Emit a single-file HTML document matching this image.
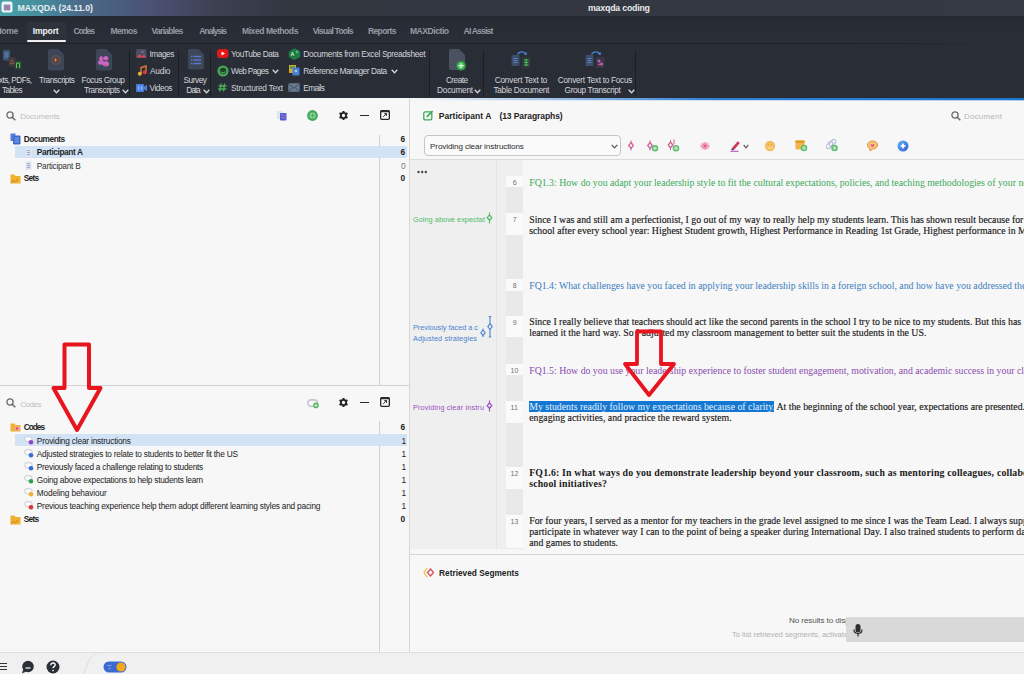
<!DOCTYPE html>
<html><head><meta charset="utf-8">
<style>
*{margin:0;padding:0;box-sizing:border-box}
html,body{width:1024px;height:674px;overflow:hidden;background:#f7f7f7;font-family:"Liberation Sans",sans-serif;position:relative}
.a{position:absolute;white-space:nowrap}
</style></head><body>
<div class="a" style="left:0px;top:0px;width:1024px;height:16px;background:linear-gradient(90deg,#49a2a7 0px,#4590a0 35px,#4a6888 85px,#4b5274 150px,#3e4052 215px,#32363f 290px,#343944 1024px);"></div>
<svg class="a" style="left:1px;top:1px" width="12" height="12" viewBox="0 0 12 12"><rect x="0.5" y="0.5" width="11" height="11" rx="2.2" fill="#eef6fa"/><rect x="2.8" y="3.5" width="6.5" height="6" rx="0.5" fill="#8a8fb0"/><path d="M4.5 4.5v4M7.5 4.5v4" stroke="#c070a0" stroke-width="1"/><path d="M5.5 5.5l1 2" stroke="#6a7ad0" stroke-width="1"/></svg>
<div class="a" style="left:17.50px;top:2.50px;font:bold 8.8px/11px 'Liberation Sans',sans-serif;color:#e9edf0;letter-spacing:-0.033px;">MAXQDA (24.11.0)</div>
<div class="a" style="left:588.00px;top:2.50px;font:bold 8.8px/11px 'Liberation Sans',sans-serif;color:#e8e9ec;letter-spacing:-0.212px;">maxqda coding</div>
<div class="a" style="left:0px;top:16px;width:1024px;height:27px;background:linear-gradient(180deg,#24282f 0px,#282c34 8px,#2a2e37 27px);"></div>
<div class="a" style="left:27px;top:22px;width:39px;height:18px;background:#2e323b;"></div>
<div class="a" style="left:27px;top:40px;width:39px;height:2px;background:#f0f0f0;border-radius:1px"></div>
<div class="a" style="left:-4.50px;top:25.70px;font:bold 8.6px/11px 'Liberation Sans',sans-serif;color:#979ba3;letter-spacing:-0.336px;">Home</div>
<div class="a" style="left:32.80px;top:25.70px;font:bold 8.6px/11px 'Liberation Sans',sans-serif;color:#f2f3f5;letter-spacing:-0.169px;">Import</div>
<div class="a" style="left:73.40px;top:25.70px;font:bold 8.6px/11px 'Liberation Sans',sans-serif;color:#979ba3;letter-spacing:-1.168px;">Codes</div>
<div class="a" style="left:110.40px;top:25.70px;font:bold 8.6px/11px 'Liberation Sans',sans-serif;color:#979ba3;letter-spacing:-0.632px;">Memos</div>
<div class="a" style="left:151.60px;top:25.70px;font:bold 8.6px/11px 'Liberation Sans',sans-serif;color:#979ba3;letter-spacing:-0.757px;">Variables</div>
<div class="a" style="left:199.20px;top:25.70px;font:bold 8.6px/11px 'Liberation Sans',sans-serif;color:#979ba3;letter-spacing:-1.070px;">Analysis</div>
<div class="a" style="left:242.00px;top:25.70px;font:bold 8.6px/11px 'Liberation Sans',sans-serif;color:#979ba3;letter-spacing:-0.470px;">Mixed Methods</div>
<div class="a" style="left:312.70px;top:25.70px;font:bold 8.6px/11px 'Liberation Sans',sans-serif;color:#979ba3;letter-spacing:-0.807px;">Visual Tools</div>
<div class="a" style="left:367.90px;top:25.70px;font:bold 8.6px/11px 'Liberation Sans',sans-serif;color:#979ba3;letter-spacing:-0.635px;">Reports</div>
<div class="a" style="left:409.90px;top:25.70px;font:bold 8.6px/11px 'Liberation Sans',sans-serif;color:#979ba3;letter-spacing:-0.475px;">MAXDictio</div>
<div class="a" style="left:463.60px;top:25.70px;font:bold 8.6px/11px 'Liberation Sans',sans-serif;color:#979ba3;letter-spacing:-0.846px;">AI Assist</div>
<div class="a" style="left:0px;top:43px;width:1024px;height:55px;background:#292d36;"></div>
<div class="a" style="left:0px;top:43px;width:1024px;height:1px;background:linear-gradient(90deg,#1f2228 0px,#1f2228 850px,#292d36 1024px);"></div>
<div class="a" style="left:129px;top:50px;width:1px;height:46px;background:#1b1e24;"></div>
<div class="a" style="left:178px;top:50px;width:1px;height:46px;background:#1b1e24;"></div>
<div class="a" style="left:210px;top:50px;width:1px;height:46px;background:#1b1e24;"></div>
<div class="a" style="left:429px;top:50px;width:1px;height:46px;background:#1b1e24;"></div>
<div class="a" style="left:483px;top:50px;width:1px;height:46px;background:#1b1e24;"></div>
<div class="a" style="left:635px;top:50px;width:1px;height:46px;background:#1b1e24;"></div>
<svg class="a" style="left:2px;top:49px" width="22" height="22" viewBox="0 0 22 22"><rect x="1" y="1" width="7" height="10.5" rx="1" fill="#3c5676"/><path d="M2.5 4h4M2.5 6h4M2.5 8h4" stroke="#6f94c4" stroke-width="0.9"/><rect x="6.5" y="8" width="7" height="9.5" rx="1" fill="#45383e"/><path d="M10 10.5l2 4h-4z" fill="none" stroke="#8a5048" stroke-width="0.9"/><rect x="12.5" y="12" width="7.5" height="8.5" rx="1" fill="#284630"/><path d="M14.5 14v5M17.5 14v5M14.5 14h3" stroke="#58c868" stroke-width="1"/></svg>
<div class="a" style="left:-1.00px;top:75.00px;font:normal 8.3px/10px 'Liberation Sans',sans-serif;color:#d2d5da;letter-spacing:-0.585px;">xts, PDFs,</div>
<div class="a" style="left:2.00px;top:84.90px;font:normal 8.3px/10px 'Liberation Sans',sans-serif;color:#d2d5da;letter-spacing:-0.677px;">Tables</div>
<svg class="a" style="left:48px;top:49px" width="16" height="22" viewBox="0 0 16 22"><path d="M2 0h8.5l5.5 5.5V19.5a2 2 0 0 1-2 2H2a2 2 0 0 1-2-2V2a2 2 0 0 1 2-2z" fill="#3e4758"/><circle cx="8" cy="11" r="4.3" fill="#4a4650" stroke="#7a5048" stroke-width="1"/><path d="M6.8 9.2l3 1.8-3 1.8z" fill="#e8b030"/><circle cx="8.6" cy="11" r="0.9" fill="#e02828"/></svg>
<div class="a" style="left:39.00px;top:75.00px;font:normal 8.3px/10px 'Liberation Sans',sans-serif;color:#d2d5da;letter-spacing:-0.475px;">Transcripts</div>
<svg class="a" style="left:53px;top:89px" width="7" height="5" viewBox="0 0 7 5"><path d="M0.7 0.8L3.50 3.8L6.30 0.8" stroke="#d2d5da" stroke-width="1.3" fill="none"/></svg>
<svg class="a" style="left:96px;top:49px" width="16" height="22" viewBox="0 0 16 22"><path d="M2 0h8.5l5.5 5.5V19.5a2 2 0 0 1-2 2H2a2 2 0 0 1-2-2V2a2 2 0 0 1 2-2z" fill="#3e4758"/><circle cx="5.5" cy="9.5" r="2.3" fill="#c868c8"/><circle cx="10" cy="9.2" r="2.3" fill="#c868c8"/><ellipse cx="5" cy="13.5" rx="3" ry="2.2" fill="#c868c8"/><ellipse cx="9.8" cy="14.8" rx="3.2" ry="2.6" fill="#c868c8"/><circle cx="6.5" cy="9" r="0.8" fill="#e03040"/><circle cx="11.5" cy="11" r="0.8" fill="#e03040"/><circle cx="9.5" cy="16" r="0.8" fill="#e03040"/></svg>
<div class="a" style="left:81.60px;top:75.00px;font:normal 8.3px/10px 'Liberation Sans',sans-serif;color:#d2d5da;letter-spacing:-0.457px;">Focus Group</div>
<div class="a" style="left:84.00px;top:84.90px;font:normal 8.3px/10px 'Liberation Sans',sans-serif;color:#d2d5da;letter-spacing:-0.475px;">Transcripts</div>
<svg class="a" style="left:121.5px;top:89px" width="7" height="5" viewBox="0 0 7 5"><path d="M0.7 0.8L3.50 3.8L6.30 0.8" stroke="#d2d5da" stroke-width="1.3" fill="none"/></svg>
<svg class="a" style="left:136px;top:49px" width="11" height="9" viewBox="0 0 11 9"><rect x="0" y="0" width="10.5" height="9" rx="1.5" fill="#4a5060"/><path d="M0.5 8.5l3-3.5 2.5 2.5 2-2 2.5 3z" fill="#d84858"/><circle cx="6.5" cy="3" r="1" fill="#9a7ab0"/></svg>
<div class="a" style="left:149.50px;top:49.00px;font:normal 8.3px/10px 'Liberation Sans',sans-serif;color:#d2d5da;letter-spacing:-0.465px;">Images</div>
<svg class="a" style="left:137px;top:65px" width="10" height="11" viewBox="0 0 10 11"><path d="M4 9V2.5l5-1.5v6" stroke="#e07838" stroke-width="1.4" fill="none"/><circle cx="2.8" cy="8.8" r="2" fill="#e8b030"/><circle cx="7.8" cy="7.3" r="2" fill="#d84040"/></svg>
<div class="a" style="left:150.00px;top:66.10px;font:normal 8.3px/10px 'Liberation Sans',sans-serif;color:#d2d5da;letter-spacing:-0.212px;">Audio</div>
<svg class="a" style="left:136px;top:84px" width="11" height="8" viewBox="0 0 11 8"><rect x="0" y="0" width="8" height="8" rx="1" fill="#4a7ee0"/><path d="M8 2.5l3-1.5v6l-3-1.5z" fill="#4a7ee0"/><rect x="2" y="2" width="1.5" height="4" fill="#8ab0f0"/><rect x="5" y="2" width="1.5" height="4" fill="#8ab0f0"/></svg>
<div class="a" style="left:149.50px;top:82.80px;font:normal 8.3px/10px 'Liberation Sans',sans-serif;color:#d2d5da;letter-spacing:-0.446px;">Videos</div>
<svg class="a" style="left:188px;top:49px" width="16" height="21" viewBox="0 0 16 21"><path d="M2 0h8.5l5.5 5.5V18.5a2 2 0 0 1-2 2H2a2 2 0 0 1-2-2V2a2 2 0 0 1 2-2z" fill="#3e4758"/><path d="M3 7.5h10M3 11h10M3 14.5h10" stroke="#5878c8" stroke-width="1.4"/><path d="M5 6.5v9" stroke="#3c4556" stroke-width="0.8"/></svg>
<div class="a" style="left:183.60px;top:74.50px;font:normal 8.3px/10px 'Liberation Sans',sans-serif;color:#d2d5da;letter-spacing:-0.503px;">Survey</div>
<div class="a" style="left:186.20px;top:84.90px;font:normal 8.3px/10px 'Liberation Sans',sans-serif;color:#d2d5da;letter-spacing:-1.018px;">Data</div>
<svg class="a" style="left:203px;top:89px" width="7" height="5" viewBox="0 0 7 5"><path d="M0.7 0.8L3.50 3.8L6.30 0.8" stroke="#d2d5da" stroke-width="1.3" fill="none"/></svg>
<svg class="a" style="left:217px;top:49px" width="12" height="9" viewBox="0 0 12 9"><rect x="0" y="0" width="11.5" height="9" rx="3" fill="#e01818"/><path d="M4.5 2.5l3.5 2-3.5 2z" fill="#fff"/></svg>
<div class="a" style="left:231.10px;top:49.00px;font:normal 8.3px/10px 'Liberation Sans',sans-serif;color:#d2d5da;letter-spacing:-0.418px;">YouTube Data</div>
<svg class="a" style="left:217px;top:65px" width="12" height="12" viewBox="0 0 12 12"><circle cx="6" cy="6" r="5.6" fill="#48a858"/><circle cx="6" cy="6" r="3.2" fill="#24402c"/><path d="M3.6 6.5c0.8 1.6 3.2 2 4.6 0.2" stroke="#48a858" stroke-width="1.1" fill="none"/></svg>
<div class="a" style="left:231.10px;top:66.10px;font:normal 8.3px/10px 'Liberation Sans',sans-serif;color:#d2d5da;letter-spacing:-0.618px;">Web Pages</div>
<svg class="a" style="left:272px;top:69px" width="7" height="5" viewBox="0 0 7 5"><path d="M0.7 0.8L3.50 3.8L6.30 0.8" stroke="#d2d5da" stroke-width="1.3" fill="none"/></svg>
<svg class="a" style="left:218px;top:83px" width="9" height="9" viewBox="0 0 9 9"><path d="M3 0.5L2 8.5M6.5 0.5l-1 8M0.5 3h8M0.2 6h8" stroke="#48b060" stroke-width="1.3"/></svg>
<div class="a" style="left:231.10px;top:82.80px;font:normal 8.3px/10px 'Liberation Sans',sans-serif;color:#d2d5da;letter-spacing:-0.268px;">Structured Text</div>
<svg class="a" style="left:288px;top:48px" width="13" height="12" viewBox="0 0 13 12"><path d="M6.5 0.3l5.8 3.2v5.4l-5.8 3.2-5.8-3.2V3.5z" fill="#1f7a44"/><path d="M3 8l1.5-4 1.5 4M3.6 6.6h1.8" stroke="#c8f0d0" stroke-width="0.8" fill="none"/><circle cx="9" cy="4" r="1.4" fill="#40c070"/></svg>
<div class="a" style="left:303.30px;top:49.00px;font:normal 8.3px/10px 'Liberation Sans',sans-serif;color:#d2d5da;letter-spacing:-0.341px;">Documents from Excel Spreadsheet</div>
<svg class="a" style="left:289px;top:65px" width="11" height="11" viewBox="0 0 11 11"><rect x="0" y="0" width="7" height="8" fill="#d8a830"/><rect x="1" y="1" width="5" height="3" fill="#58a048"/><rect x="3.5" y="2.5" width="7" height="8" fill="#4a80d0"/><circle cx="7" cy="6" r="1.3" fill="#a8c8f0"/></svg>
<div class="a" style="left:303.30px;top:66.10px;font:normal 8.3px/10px 'Liberation Sans',sans-serif;color:#d2d5da;letter-spacing:-0.445px;">Reference Manager Data</div>
<svg class="a" style="left:390.5px;top:69px" width="7" height="5" viewBox="0 0 7 5"><path d="M0.7 0.8L3.50 3.8L6.30 0.8" stroke="#d2d5da" stroke-width="1.3" fill="none"/></svg>
<svg class="a" style="left:288px;top:83px" width="12" height="9" viewBox="0 0 12 9"><rect x="0.3" y="0.3" width="11.4" height="8.4" rx="1" fill="#6a7c92"/><path d="M0.6 0.8l5.4 4.4 5.4-4.4M0.6 8.2l4-3.2M11.4 8.2l-4-3.2" stroke="#3b4554" stroke-width="0.9" fill="none"/></svg>
<div class="a" style="left:303.30px;top:82.80px;font:normal 8.3px/10px 'Liberation Sans',sans-serif;color:#d2d5da;letter-spacing:-0.680px;">Emails</div>
<svg class="a" style="left:449px;top:49px" width="19" height="23" viewBox="0 0 19 23"><path d="M2 0h8l6 6v13a2 2 0 0 1-2 2H2a2 2 0 0 1-2-2V2a2 2 0 0 1 2-2z" fill="#4a5262"/><circle cx="12" cy="16.7" r="5" fill="#2c8a40"/><circle cx="12" cy="16.7" r="3.6" fill="#48c060"/><path d="M12 14.2v5M9.5 16.7h5" stroke="#e8ffe8" stroke-width="1.2"/></svg>
<div class="a" style="left:445.90px;top:74.80px;font:normal 8.3px/10px 'Liberation Sans',sans-serif;color:#d2d5da;letter-spacing:-0.540px;">Create</div>
<div class="a" style="left:437.00px;top:84.90px;font:normal 8.3px/10px 'Liberation Sans',sans-serif;color:#d2d5da;letter-spacing:-0.235px;">Document</div>
<svg class="a" style="left:474px;top:89px" width="7" height="5" viewBox="0 0 7 5"><path d="M0.7 0.8L3.50 3.8L6.30 0.8" stroke="#d2d5da" stroke-width="1.3" fill="none"/></svg>
<svg class="a" style="left:511px;top:50px" width="20" height="19" viewBox="0 0 20 19"><path d="M6.5 4.5C8 1.5 12 1 14.5 3.5" stroke="#4a8ae0" stroke-width="1.3" fill="none"/><path d="M15.5 1.8l0.4 3.2-3-0.6z" fill="#4a8ae0"/><rect x="0.5" y="5" width="8" height="11" rx="1" fill="#3d4d6a"/><path d="M2.5 8.5h4M2.5 10.5h4M2.5 12.5h4" stroke="#5a88d0" stroke-width="0.9"/><rect x="11" y="7" width="8.5" height="11" rx="1" fill="#2e3a38"/><path d="M13 10h4.5M13 12.5h4.5M13 15h4.5M15.2 9v7" stroke="#40c060" stroke-width="1"/></svg>
<div class="a" style="left:494.70px;top:74.80px;font:normal 8.3px/10px 'Liberation Sans',sans-serif;color:#d2d5da;letter-spacing:-0.211px;">Convert Text to</div>
<div class="a" style="left:493.50px;top:84.90px;font:normal 8.3px/10px 'Liberation Sans',sans-serif;color:#d2d5da;letter-spacing:-0.321px;">Table Document</div>
<svg class="a" style="left:585px;top:50px" width="20" height="19" viewBox="0 0 20 19"><path d="M6.5 4.5C8 1.5 12 1 14.5 3.5" stroke="#4a8ae0" stroke-width="1.3" fill="none"/><path d="M15.5 1.8l0.4 3.2-3-0.6z" fill="#4a8ae0"/><rect x="0.5" y="5" width="8" height="11" rx="1" fill="#3d4d6a"/><path d="M2.5 8.5h4M2.5 10.5h4M2.5 12.5h4" stroke="#5a88d0" stroke-width="0.9"/><rect x="11" y="7" width="8.5" height="11" rx="1" fill="#3c3648"/><circle cx="14" cy="11" r="1.5" fill="#c060c0"/><circle cx="16.5" cy="14" r="1.5" fill="#c060c0"/><circle cx="14" cy="14.5" r="1" fill="#e05070"/></svg>
<div class="a" style="left:557.80px;top:74.60px;font:normal 8.3px/10px 'Liberation Sans',sans-serif;color:#d2d5da;letter-spacing:-0.295px;">Convert Text to Focus</div>
<div class="a" style="left:564.60px;top:84.90px;font:normal 8.3px/10px 'Liberation Sans',sans-serif;color:#d2d5da;letter-spacing:-0.376px;">Group Transcript</div>
<svg class="a" style="left:627.5px;top:89px" width="7" height="5" viewBox="0 0 7 5"><path d="M0.7 0.8L3.50 3.8L6.30 0.8" stroke="#d2d5da" stroke-width="1.3" fill="none"/></svg>
<div class="a" style="left:0px;top:98px;width:409px;height:555px;background:#f7f7f7;"></div>
<div class="a" style="left:409px;top:98px;width:1px;height:555px;background:#d6d6d6;"></div>
<svg class="a" style="left:6px;top:111px" width="10" height="10" viewBox="0 0 10 10"><circle cx="4" cy="4" r="3.1" stroke="#6a6a6a" stroke-width="1.3" fill="none"/><path d="M6.2 6.2L9.3 9.3" stroke="#6a6a6a" stroke-width="1.5"/></svg>
<div class="a" style="left:20.20px;top:111.60px;font:normal 8.1px/10px 'Liberation Sans',sans-serif;color:#c0c0c0;letter-spacing:-0.161px;">Documents</div>
<svg class="a" style="left:276px;top:110px" width="11" height="11" viewBox="0 0 11 11"><rect x="1" y="1" width="5" height="8" fill="#dde6f2"/><rect x="4" y="3" width="6.5" height="7.5" rx="0.8" fill="#4a62d8"/><path d="M5 4.5l4.5 1.5M5 7l4.5 1.5" stroke="#d070b0" stroke-width="0.9"/></svg>
<svg class="a" style="left:307px;top:110px" width="12" height="12" viewBox="0 0 12 12"><circle cx="5.5" cy="5.5" r="5.4" fill="#48a85a"/><circle cx="5.5" cy="5.5" r="3" fill="#8ad49a"/><path d="M5.5 3.5v4M3.5 5.5h4" stroke="#48a85a" stroke-width="1"/></svg>
<svg class="a" style="left:338px;top:110px" width="11" height="11" viewBox="0 0 11 11"><g transform="translate(5.5 5.5)"><circle r="2.6" fill="none" stroke="#252525" stroke-width="1.9"/><path d="M0 -4.6v2M0 2.6v2M-3.98 -2.3l1.73 1M2.25 1.3l1.73 1M-3.98 2.3l1.73 -1M2.25 -1.3l1.73 -1" stroke="#252525" stroke-width="2"/></g></svg>
<div class="a" style="left:360px;top:114.5px;width:9px;height:1.8px;background:#2a2a2a;"></div>
<svg class="a" style="left:380px;top:110px" width="10" height="10" viewBox="0 0 10 10"><rect x="0.65" y="0.65" width="8.7" height="8.7" fill="none" stroke="#2a2a2a" stroke-width="1.3" rx="1"/><rect x="0.65" y="0.65" width="8.7" height="1.6" fill="#2a2a2a"/><path d="M3.3 6.8L6.5 3.6M4.3 3.6h2.2v2.2" stroke="#2a2a2a" stroke-width="1" fill="none"/></svg>
<div class="a" style="left:379px;top:135px;width:1px;height:250px;background:#d2d2d2;"></div>
<div class="a" style="left:15px;top:145.5px;width:392px;height:12.5px;background:#d3e3f6;"></div>
<svg class="a" style="left:10px;top:133px" width="11" height="12" viewBox="0 0 11 12"><rect x="0.5" y="0.5" width="5" height="7.5" fill="#5a7ad8"/><rect x="3" y="2.5" width="7.5" height="9" rx="1.2" fill="#3a6ad0"/><path d="M4.5 5h4.5M4.5 7h4.5M4.5 9h4.5" stroke="#9ab8f0" stroke-width="0.8"/></svg>
<div class="a" style="left:23.70px;top:134.40px;font:bold 8.3px/10px 'Liberation Sans',sans-serif;color:#1e1e1e;letter-spacing:-0.462px;">Documents</div>
<div class="a" style="left:400.50px;top:134.40px;font:bold 8.3px/10px 'Liberation Sans',sans-serif;color:#1e1e1e;letter-spacing:0.000px;">6</div>
<svg class="a" style="left:25px;top:148px" width="7" height="9" viewBox="0 0 7 9"><rect x="0.5" y="0.5" width="6" height="8.5" fill="#e2e7f3"/><path d="M1.8 2.6h3.4M1.8 4.6h3.4M1.8 6.6h3.4" stroke="#8898c0" stroke-width="0.8"/></svg>
<div class="a" style="left:36.80px;top:147.40px;font:bold 8.3px/10px 'Liberation Sans',sans-serif;color:#1e1e1e;letter-spacing:-0.390px;">Participant A</div>
<div class="a" style="left:400.50px;top:147.40px;font:bold 8.3px/10px 'Liberation Sans',sans-serif;color:#1e1e1e;letter-spacing:0.000px;">6</div>
<svg class="a" style="left:25px;top:161px" width="7" height="9" viewBox="0 0 7 9"><rect x="0.5" y="0.5" width="6" height="8.5" fill="#e2e7f3"/><path d="M1.8 2.6h3.4M1.8 4.6h3.4M1.8 6.6h3.4" stroke="#8898c0" stroke-width="0.8"/></svg>
<div class="a" style="left:36.80px;top:160.60px;font:normal 8.3px/10px 'Liberation Sans',sans-serif;color:#333;letter-spacing:-0.263px;">Participant B</div>
<div class="a" style="left:401.00px;top:160.60px;font:normal 8.3px/10px 'Liberation Sans',sans-serif;color:#777;letter-spacing:0.000px;">0</div>
<svg class="a" style="left:10px;top:173px" width="11" height="11" viewBox="0 0 11 11"><path d="M0.5 1.5h4l1 1.5h5v7.5h-10z" fill="#f0b030"/><path d="M1 10l2.5-3 2 2 2.5-3" stroke="#c87818" stroke-width="0.9" fill="none"/></svg>
<div class="a" style="left:23.70px;top:173.40px;font:bold 8.3px/10px 'Liberation Sans',sans-serif;color:#1e1e1e;letter-spacing:-0.704px;">Sets</div>
<div class="a" style="left:400.50px;top:173.40px;font:bold 8.3px/10px 'Liberation Sans',sans-serif;color:#1e1e1e;letter-spacing:0.000px;">0</div>
<div class="a" style="left:0px;top:384.5px;width:409px;height:1px;background:#d2d2d2;"></div>
<svg class="a" style="left:6px;top:398px" width="10" height="10" viewBox="0 0 10 10"><circle cx="4" cy="4" r="3.1" stroke="#6a6a6a" stroke-width="1.3" fill="none"/><path d="M6.2 6.2L9.3 9.3" stroke="#6a6a6a" stroke-width="1.5"/></svg>
<div class="a" style="left:20.20px;top:399.50px;font:normal 8.1px/10px 'Liberation Sans',sans-serif;color:#c0c0c0;letter-spacing:-0.527px;">Codes</div>
<svg class="a" style="left:307px;top:398px" width="13" height="11" viewBox="0 0 13 11"><rect x="0.9" y="1.9" width="9.5" height="6.5" rx="3.2" fill="#fafafa" stroke="#c4c8d0" stroke-width="1.6"/><circle cx="9" cy="7.4" r="2.8" fill="#58b868"/><path d="M9 6v2.8M7.6 7.4h2.8" stroke="#e8f8ea" stroke-width="0.9"/></svg>
<svg class="a" style="left:338px;top:397px" width="11" height="11" viewBox="0 0 11 11"><g transform="translate(5.5 5.5)"><circle r="2.6" fill="none" stroke="#252525" stroke-width="1.9"/><path d="M0 -4.6v2M0 2.6v2M-3.98 -2.3l1.73 1M2.25 1.3l1.73 1M-3.98 2.3l1.73 -1M2.25 -1.3l1.73 -1" stroke="#252525" stroke-width="2"/></g></svg>
<div class="a" style="left:360px;top:401.5px;width:9px;height:1.8px;background:#2a2a2a;"></div>
<svg class="a" style="left:380px;top:397px" width="10" height="10" viewBox="0 0 10 10"><rect x="0.65" y="0.65" width="8.7" height="8.7" fill="none" stroke="#2a2a2a" stroke-width="1.3" rx="1"/><rect x="0.65" y="0.65" width="8.7" height="1.6" fill="#2a2a2a"/><path d="M3.3 6.8L6.5 3.6M4.3 3.6h2.2v2.2" stroke="#2a2a2a" stroke-width="1" fill="none"/></svg>
<div class="a" style="left:379px;top:421px;width:1px;height:232px;background:#d2d2d2;"></div>
<div class="a" style="left:15px;top:433.5px;width:392px;height:12.5px;background:#d3e3f6;"></div>
<svg class="a" style="left:10px;top:422px" width="11" height="10" viewBox="0 0 11 10"><path d="M0.5 1.5h4l1 1.5h5v6.5h-10z" fill="#f0b030"/><rect x="4" y="4.5" width="6" height="4" rx="2" fill="#f0a0b0"/><circle cx="7" cy="6.5" r="1" fill="#d03060"/></svg>
<div class="a" style="left:23.70px;top:421.70px;font:bold 8.3px/10px 'Liberation Sans',sans-serif;color:#1e1e1e;letter-spacing:-0.989px;">Codes</div>
<div class="a" style="left:400.50px;top:421.70px;font:bold 8.3px/10px 'Liberation Sans',sans-serif;color:#1e1e1e;letter-spacing:0.000px;">6</div>
<svg class="a" style="left:24px;top:434.5px" width="10" height="10" viewBox="0 0 10 10"><rect x="0.8" y="1.6" width="7.2" height="5" rx="2.5" fill="#fbfbfb" stroke="#d2d6dc" stroke-width="1.3"/><circle cx="7" cy="7.2" r="2.3" fill="#8a48c8"/></svg>
<div class="a" style="left:36.80px;top:435.50px;font:normal 8.3px/10px 'Liberation Sans',sans-serif;color:#222;letter-spacing:-0.185px;">Providing clear instructions</div>
<div class="a" style="left:401.50px;top:435.50px;font:normal 8.3px/10px 'Liberation Sans',sans-serif;color:#222;letter-spacing:0.000px;">1</div>
<svg class="a" style="left:24px;top:447.6px" width="10" height="10" viewBox="0 0 10 10"><rect x="0.8" y="1.6" width="7.2" height="5" rx="2.5" fill="#fbfbfb" stroke="#d2d6dc" stroke-width="1.3"/><circle cx="7" cy="7.2" r="2.3" fill="#3a6ad8"/></svg>
<div class="a" style="left:36.80px;top:448.60px;font:normal 8.3px/10px 'Liberation Sans',sans-serif;color:#222;letter-spacing:-0.225px;">Adjusted strategies to relate to students to better fit the US</div>
<div class="a" style="left:401.50px;top:448.60px;font:normal 8.3px/10px 'Liberation Sans',sans-serif;color:#222;letter-spacing:0.000px;">1</div>
<svg class="a" style="left:24px;top:460.7px" width="10" height="10" viewBox="0 0 10 10"><rect x="0.8" y="1.6" width="7.2" height="5" rx="2.5" fill="#fbfbfb" stroke="#d2d6dc" stroke-width="1.3"/><circle cx="7" cy="7.2" r="2.3" fill="#3a6ad8"/></svg>
<div class="a" style="left:36.80px;top:461.70px;font:normal 8.3px/10px 'Liberation Sans',sans-serif;color:#222;letter-spacing:-0.242px;">Previously faced a challenge relating to students</div>
<div class="a" style="left:401.50px;top:461.70px;font:normal 8.3px/10px 'Liberation Sans',sans-serif;color:#222;letter-spacing:0.000px;">1</div>
<svg class="a" style="left:24px;top:473.8px" width="10" height="10" viewBox="0 0 10 10"><rect x="0.8" y="1.6" width="7.2" height="5" rx="2.5" fill="#fbfbfb" stroke="#d2d6dc" stroke-width="1.3"/><circle cx="7" cy="7.2" r="2.3" fill="#30a050"/></svg>
<div class="a" style="left:36.80px;top:474.80px;font:normal 8.3px/10px 'Liberation Sans',sans-serif;color:#222;letter-spacing:-0.243px;">Going above expectations to help students learn</div>
<div class="a" style="left:401.50px;top:474.80px;font:normal 8.3px/10px 'Liberation Sans',sans-serif;color:#222;letter-spacing:0.000px;">1</div>
<svg class="a" style="left:24px;top:486.9px" width="10" height="10" viewBox="0 0 10 10"><rect x="0.8" y="1.6" width="7.2" height="5" rx="2.5" fill="#fbfbfb" stroke="#d2d6dc" stroke-width="1.3"/><circle cx="7" cy="7.2" r="2.3" fill="#f0b030"/></svg>
<div class="a" style="left:36.80px;top:487.90px;font:normal 8.3px/10px 'Liberation Sans',sans-serif;color:#222;letter-spacing:-0.151px;">Modeling behaviour</div>
<div class="a" style="left:401.50px;top:487.90px;font:normal 8.3px/10px 'Liberation Sans',sans-serif;color:#222;letter-spacing:0.000px;">1</div>
<svg class="a" style="left:24px;top:500.0px" width="10" height="10" viewBox="0 0 10 10"><rect x="0.8" y="1.6" width="7.2" height="5" rx="2.5" fill="#fbfbfb" stroke="#d2d6dc" stroke-width="1.3"/><circle cx="7" cy="7.2" r="2.3" fill="#d83838"/></svg>
<div class="a" style="left:36.80px;top:501.00px;font:normal 8.3px/10px 'Liberation Sans',sans-serif;color:#222;letter-spacing:-0.217px;">Previous teaching experience help them adopt different learning styles and pacing</div>
<div class="a" style="left:401.50px;top:501.00px;font:normal 8.3px/10px 'Liberation Sans',sans-serif;color:#222;letter-spacing:0.000px;">1</div>
<svg class="a" style="left:10px;top:513.5px" width="12" height="11" viewBox="0 0 12 11"><path d="M0.5 1.5h4l1 1.5h5v7.5h-10z" fill="#f0b030"/><path d="M1 10l2.5-3 2 2 2.5-3" stroke="#c87818" stroke-width="0.9" fill="none"/></svg>
<div class="a" style="left:23.70px;top:514.00px;font:bold 8.3px/10px 'Liberation Sans',sans-serif;color:#1e1e1e;letter-spacing:-0.704px;">Sets</div>
<div class="a" style="left:400.50px;top:514.00px;font:bold 8.3px/10px 'Liberation Sans',sans-serif;color:#1e1e1e;letter-spacing:0.000px;">0</div>
<div class="a" style="left:410px;top:98px;width:614px;height:555px;background:#f7f7f7;"></div>
<div class="a" style="left:410px;top:97.5px;width:614px;height:2px;background:linear-gradient(90deg,rgba(40,120,210,0) 0px,rgba(40,120,210,0.35) 120px,rgba(30,115,210,0.9) 300px,#1f74cc 614px);"></div>
<div class="a" style="left:410px;top:99.5px;width:614px;height:1.2px;background:linear-gradient(90deg,rgba(120,180,240,0) 0px,rgba(120,180,240,0.2) 150px,rgba(120,180,240,0.6) 614px);"></div>
<svg class="a" style="left:423px;top:110px" width="11" height="11" viewBox="0 0 11 11"><rect x="0.8" y="1.8" width="8" height="8" rx="1.3" fill="none" stroke="#3aa858" stroke-width="1.3"/><path d="M3.8 6.8L9.6 1" stroke="#3aa858" stroke-width="1.7"/></svg>
<div class="a" style="left:438.70px;top:111.10px;font:bold 8.5px/11px 'Liberation Sans',sans-serif;color:#222;letter-spacing:0.058px;">Participant A</div>
<div class="a" style="left:499.40px;top:111.10px;font:bold 8.5px/11px 'Liberation Sans',sans-serif;color:#222;letter-spacing:-0.069px;">(13 Paragraphs)</div>
<svg class="a" style="left:951px;top:111px" width="10" height="10" viewBox="0 0 10 10"><circle cx="4" cy="4" r="3.1" stroke="#6a6a6a" stroke-width="1.3" fill="none"/><path d="M6.2 6.2L9.3 9.3" stroke="#6a6a6a" stroke-width="1.5"/></svg>
<div class="a" style="left:964.00px;top:111.60px;font:normal 8.1px/10px 'Liberation Sans',sans-serif;color:#b8b8b8;letter-spacing:0.152px;">Document</div>
<div class="a" style="left:423.5px;top:135px;width:197px;height:21px;background:#fafafa;border:1px solid #c6c6c6;border-radius:4px"></div>
<div class="a" style="left:430.00px;top:142.00px;font:normal 8.1px/10px 'Liberation Sans',sans-serif;color:#2a2a2a;letter-spacing:-0.104px;">Providing clear instructions</div>
<svg class="a" style="left:610.5px;top:143.5px" width="7" height="5" viewBox="0 0 7 5"><path d="M0.7 0.8L3.50 3.8L6.30 0.8" stroke="#555" stroke-width="1.2" fill="none"/></svg>
<svg class="a" style="left:627px;top:140px" width="8" height="11" viewBox="0 0 8 11"><path d="M4 0.5v2M4 8.5v2" stroke="#d0609a" stroke-width="1"/><path d="M4 2.5L6.3 5.5 4 8.5 1.7000000000000002 5.5z" fill="none" stroke="#d0609a" stroke-width="1.3"/></svg>
<svg class="a" style="left:646px;top:140px" width="13" height="12" viewBox="0 0 13 12"><path d="M4 0.5v2M4 8.5v2" stroke="#d0609a" stroke-width="1"/><path d="M4 2.5L6.3 5.5 4 8.5 1.7000000000000002 5.5z" fill="none" stroke="#d0609a" stroke-width="1.3"/><circle cx="9" cy="8.3" r="3.3" fill="#62bc74"/><circle cx="9" cy="8.3" r="1.7" fill="#b8e6c0"/></svg>
<svg class="a" style="left:667px;top:139px" width="13" height="13" viewBox="0 0 13 13"><path d="M3.5 1v2M3.5 9v2M7 0.5v5" stroke="#d0609a" stroke-width="1"/><path d="M3.5 3L5.8 6 3.5 9 1.2000000000000002 6z" fill="none" stroke="#d0609a" stroke-width="1.3"/><circle cx="9" cy="9.3" r="3.3" fill="#62bc74"/><circle cx="9" cy="9.3" r="1.7" fill="#b8e6c0"/></svg>
<svg class="a" style="left:699px;top:141px" width="12" height="10" viewBox="0 0 12 10"><ellipse cx="6" cy="5" rx="5" ry="4" fill="#f5cadb"/><path d="M2 5h8M6 1.5v7M3.5 2.5l5 5M8.5 2.5l-5 5" stroke="#e0507e" stroke-width="0.8"/></svg>
<svg class="a" style="left:730px;top:139px" width="11" height="13" viewBox="0 0 11 13"><path d="M2 9L7.8 2.2l2 1.8-5.8 7z" fill="#d03858"/><path d="M2 9l-0.8 2.3 2.6-0.4z" fill="#402030"/><path d="M0.5 12.3h8" stroke="#a848c8" stroke-width="1"/></svg>
<svg class="a" style="left:743px;top:144px" width="6" height="5" viewBox="0 0 6 5"><path d="M0.7 0.8L3.00 3.8L5.30 0.8" stroke="#555" stroke-width="1.1" fill="none"/></svg>
<svg class="a" style="left:764px;top:140px" width="12" height="12" viewBox="0 0 12 12"><circle cx="6" cy="6" r="5.2" fill="#f2c060"/><path d="M3.5 7c1.3 1.4 3.7 1.4 5 0" stroke="#f8e0a8" stroke-width="1.1" fill="none"/><circle cx="4.3" cy="4.6" r="0.7" fill="#e09838"/><circle cx="7.7" cy="4.6" r="0.7" fill="#e09838"/></svg>
<svg class="a" style="left:795px;top:139px" width="13" height="13" viewBox="0 0 13 13"><rect x="0.5" y="1.5" width="9" height="9" rx="1" fill="#f2b648"/><rect x="0.5" y="1.5" width="9" height="2.5" fill="#e49a28"/><circle cx="9" cy="9" r="3.3" fill="#62bc74"/><circle cx="9" cy="9" r="1.7" fill="#b8e6c0"/></svg>
<svg class="a" style="left:826px;top:139px" width="13" height="13" viewBox="0 0 13 13"><rect x="1.5" y="2" width="4" height="8" rx="2" transform="rotate(40 3.5 6)" fill="none" stroke="#b0bcd8" stroke-width="1.1"/><rect x="4.5" y="0" width="4" height="8" rx="2" transform="rotate(40 6.5 4)" fill="none" stroke="#b0bcd8" stroke-width="1.1"/><circle cx="8.5" cy="9" r="3.3" fill="#62bc74"/><circle cx="8.5" cy="9" r="1.7" fill="#b8e6c0"/></svg>
<svg class="a" style="left:867px;top:140px" width="11" height="12" viewBox="0 0 11 12"><path d="M5.5 1C8.5 1 10.5 3 10.5 5S8.5 9 5.5 9L3 11V8.6C1.5 8 0.5 6.6 0.5 5 0.5 3 2.5 1 5.5 1z" fill="#f6c878" stroke="#f0883a" stroke-width="1"/><path d="M3.6 4.6c0.6-1 1.6-0.6 1.9 0.2 0.3-0.8 1.3-1.2 1.9-0.2 0.4 0.9-0.8 1.8-1.9 2.6-1.1-0.8-2.3-1.7-1.9-2.6z" fill="#e85a8a"/></svg>
<svg class="a" style="left:897px;top:140px" width="12" height="12" viewBox="0 0 12 12"><defs><linearGradient id="bg1" x1="0" y1="0" x2="1" y2="1"><stop offset="0" stop-color="#5ab8f0"/><stop offset="1" stop-color="#3a5ad8"/></linearGradient></defs><circle cx="6" cy="6" r="5.5" fill="url(#bg1)"/><path d="M6 2.8Q6.6 5.4 9.2 6 6.6 6.6 6 9.2 5.4 6.6 2.8 6 5.4 5.4 6 2.8z" fill="#fff"/></svg>
<div class="a" style="left:410px;top:159px;width:614px;height:1px;background:#dcdcdc;"></div>
<div class="a" style="left:410px;top:160px;width:113px;height:389px;background:#efefef;"></div>
<div class="a" style="left:496px;top:160px;width:1px;height:389px;background:#e6e6e6;"></div>
<div class="a" style="left:506px;top:176px;width:17px;height:373px;background:#e9e9e9;"></div>
<div class="a" style="left:523px;top:160px;width:501px;height:394px;background:#f7f7f7;"></div>
<svg class="a" style="left:416px;top:169px" width="12" height="6" viewBox="0 0 12 6"><circle cx="2.5" cy="3" r="1.2" fill="#444"/><circle cx="6.2" cy="3" r="1.2" fill="#444"/><circle cx="9.8" cy="3" r="1.2" fill="#444"/></svg>
<div class="a" style="left:506px;top:176px;width:17px;height:11px;background:#fafafa;"></div>
<div class="a" style="left:512.80px;top:178.00px;font:normal 7px/9px 'Liberation Sans',sans-serif;color:#707070;letter-spacing:0.000px;">6</div>
<div class="a" style="left:529.20px;top:176.60px;font:normal 9.8px/12px 'Liberation Serif',serif;color:#3aaa5a;letter-spacing:0.000px;">FQ1.3: How do you adapt your leadership style to fit the cultural expectations, policies, and teaching methodologies of your new school</div>
<div class="a" style="left:506px;top:213px;width:17px;height:22px;background:#fafafa;"></div>
<div class="a" style="left:512.80px;top:215.00px;font:normal 7px/9px 'Liberation Sans',sans-serif;color:#707070;letter-spacing:0.000px;">7</div>
<div class="a" style="left:529.20px;top:213.60px;font:normal 9.8px/12px 'Liberation Serif',serif;color:#1a1a1a;letter-spacing:0.000px;-webkit-text-stroke:0.15px #1a1a1a;">Since I was and still am a perfectionist, I go out of my way to really help my students learn. This has shown result because for</div>
<div class="a" style="left:529.20px;top:224.60px;font:normal 9.8px/12px 'Liberation Serif',serif;color:#1a1a1a;letter-spacing:0.000px;-webkit-text-stroke:0.15px #1a1a1a;">school after every school year: Highest Student growth, Highest Performance in Reading 1st Grade, Highest performance in Math</div>
<div class="a" style="left:506px;top:279px;width:17px;height:12px;background:#fafafa;"></div>
<div class="a" style="left:512.80px;top:281.00px;font:normal 7px/9px 'Liberation Sans',sans-serif;color:#707070;letter-spacing:0.000px;">8</div>
<div class="a" style="left:529.20px;top:280.00px;font:normal 9.8px/12px 'Liberation Serif',serif;color:#3a7ec0;letter-spacing:0.000px;">FQ1.4: What challenges have you faced in applying your leadership skills in a foreign school, and how have you addressed them?</div>
<div class="a" style="left:506px;top:316px;width:17px;height:21px;background:#fafafa;"></div>
<div class="a" style="left:512.80px;top:318.00px;font:normal 7px/9px 'Liberation Sans',sans-serif;color:#707070;letter-spacing:0.000px;">9</div>
<div class="a" style="left:529.20px;top:316.40px;font:normal 9.8px/12px 'Liberation Serif',serif;color:#1a1a1a;letter-spacing:0.000px;-webkit-text-stroke:0.15px #1a1a1a;">Since I really believe that teachers should act like the second parents in the school I try to be nice to my students. But this has</div>
<div class="a" style="left:529.20px;top:327.40px;font:normal 9.8px/12px 'Liberation Serif',serif;color:#1a1a1a;letter-spacing:0.000px;-webkit-text-stroke:0.15px #1a1a1a;">learned it the hard way. So I adjusted my classroom management to better suit the students in the US.</div>
<div class="a" style="left:506px;top:364px;width:17px;height:11px;background:#fafafa;"></div>
<div class="a" style="left:510.60px;top:366.00px;font:normal 7px/9px 'Liberation Sans',sans-serif;color:#707070;letter-spacing:0.000px;">10</div>
<div class="a" style="left:529.20px;top:364.80px;font:normal 9.8px/12px 'Liberation Serif',serif;color:#8a4ab0;letter-spacing:0.000px;">FQ1.5: How do you use your leadership experience to foster student engagement, motivation, and academic success in your class</div>
<div class="a" style="left:506px;top:401px;width:17px;height:22px;background:#fafafa;"></div>
<div class="a" style="left:510.60px;top:403.00px;font:normal 7px/9px 'Liberation Sans',sans-serif;color:#707070;letter-spacing:0.000px;">11</div>
<div class="a" style="left:529px;top:401.4px;width:244.5px;height:10.8px;background:#1478d2;"></div>
<div class="a" style="left:529.30px;top:401.20px;font:normal 9.8px/12px 'Liberation Serif',serif;color:#e6f0fb;letter-spacing:0.000px;">My students readily follow my expectations because of clarity.</div>
<div class="a" style="left:776.50px;top:401.20px;font:normal 9.8px/12px 'Liberation Serif',serif;color:#1a1a1a;letter-spacing:0.000px;-webkit-text-stroke:0.15px #1a1a1a;">At the beginning of the school year, expectations are presented. Students learn it through</div>
<div class="a" style="left:529.20px;top:412.20px;font:normal 9.8px/12px 'Liberation Serif',serif;color:#1a1a1a;letter-spacing:0.000px;-webkit-text-stroke:0.15px #1a1a1a;">engaging activities, and practice the reward system.</div>
<div class="a" style="left:506px;top:467px;width:17px;height:22px;background:#fafafa;"></div>
<div class="a" style="left:510.60px;top:469.00px;font:normal 7px/9px 'Liberation Sans',sans-serif;color:#707070;letter-spacing:0.000px;">12</div>
<div class="a" style="left:529.20px;top:467.40px;font:bold 9.8px/12px 'Liberation Serif',serif;color:#1a1a1a;letter-spacing:0.190px;">FQ1.6: In what ways do you demonstrate leadership beyond your classroom, such as mentoring colleagues, collaborating</div>
<div class="a" style="left:529.20px;top:478.40px;font:bold 9.8px/12px 'Liberation Serif',serif;color:#1a1a1a;letter-spacing:0.190px;">school initiatives?</div>
<div class="a" style="left:506px;top:515px;width:17px;height:33px;background:#fafafa;"></div>
<div class="a" style="left:510.60px;top:517.00px;font:normal 7px/9px 'Liberation Sans',sans-serif;color:#707070;letter-spacing:0.000px;">13</div>
<div class="a" style="left:529.20px;top:515.20px;font:normal 9.8px/12px 'Liberation Serif',serif;color:#1a1a1a;letter-spacing:0.000px;-webkit-text-stroke:0.15px #1a1a1a;">For four years, I served as a mentor for my teachers in the grade level assigned to me since I was the Team Lead. I always support</div>
<div class="a" style="left:529.20px;top:526.30px;font:normal 9.8px/12px 'Liberation Serif',serif;color:#1a1a1a;letter-spacing:0.000px;-webkit-text-stroke:0.15px #1a1a1a;">participate in whatever way I can to the point of being a speaker during International Day. I also trained students to perform dances</div>
<div class="a" style="left:529.20px;top:537.40px;font:normal 9.8px/12px 'Liberation Serif',serif;color:#1a1a1a;letter-spacing:0.000px;-webkit-text-stroke:0.15px #1a1a1a;">and games to students.</div>
<div class="a" style="left:413.00px;top:214.80px;font:normal 7.3px/9px 'Liberation Sans',sans-serif;color:#4cba6a;letter-spacing:0.051px;">Going above expectat</div>
<svg class="a" style="left:486px;top:212px" width="7" height="12" viewBox="0 0 7 12"><path d="M3.5 0.5v2.5M3.5 8.5v3" stroke="#4cba6a" stroke-width="1.1"/><path d="M3.5 3L5.8 5.7 3.5 8.5 1.2 5.7z" fill="none" stroke="#4cba6a" stroke-width="1.2"/></svg>
<div class="a" style="left:413.00px;top:323.00px;font:normal 7.3px/9px 'Liberation Sans',sans-serif;color:#4a82d0;letter-spacing:-0.018px;">Previously faced a c</div>
<div class="a" style="left:413.00px;top:333.60px;font:normal 7.3px/9px 'Liberation Sans',sans-serif;color:#4a82d0;letter-spacing:0.106px;">Adjusted strategies</div>
<svg class="a" style="left:479px;top:315px" width="14" height="24" viewBox="0 0 14 24"><path d="M11 1.5v7.1M11 14.6v7.4M9.8 1.5h2.4M9.8 22h2.4" stroke="#4a82d0" stroke-width="1.1"/><path d="M11 8.6L13.2 11.6 11 14.6 8.8 11.6z" fill="none" stroke="#4a82d0" stroke-width="1.1"/><path d="M4 13.5v1.5M4 20.5v1.5" stroke="#4a82d0" stroke-width="1.1"/><path d="M4 15L6.2 17.7 4 20.5 1.8 17.7z" fill="none" stroke="#4a82d0" stroke-width="1.1"/></svg>
<div class="a" style="left:413.00px;top:402.60px;font:normal 7.3px/9px 'Liberation Sans',sans-serif;color:#9a50c0;letter-spacing:0.134px;">Providing clear instru</div>
<svg class="a" style="left:486px;top:400px" width="7" height="12" viewBox="0 0 7 12"><path d="M3.5 0.5v2.5M3.5 8.5v3" stroke="#9a50c0" stroke-width="1.1"/><path d="M3.5 3L5.8 5.7 3.5 8.5 1.2 5.7z" fill="none" stroke="#9a50c0" stroke-width="1.2"/></svg>
<div class="a" style="left:410px;top:553.5px;width:614px;height:1.2px;background:#d6d6d6;"></div>
<svg class="a" style="left:423px;top:567px" width="12" height="11" viewBox="0 0 12 11"><path d="M4 1L1 5.5 4 10" stroke="#f2c040" stroke-width="1.3" fill="none"/><path d="M7.5 2L10.5 5.5 7.5 9 4.5 5.5z" fill="none" stroke="#e04a5a" stroke-width="1.3"/></svg>
<div class="a" style="left:439.00px;top:568.00px;font:bold 8.3px/10px 'Liberation Sans',sans-serif;color:#222;letter-spacing:0.011px;">Retrieved Segments</div>
<div class="a" style="left:789.00px;top:615.50px;font:normal 8.1px/10px 'Liberation Sans',sans-serif;color:#555;letter-spacing:-0.100px;">No results to display</div>
<div class="a" style="left:732.00px;top:630.00px;font:normal 7.7px/10px 'Liberation Sans',sans-serif;color:#b2b2b2;letter-spacing:-0.050px;">To list retrieved segments, activate</div>
<div class="a" style="left:846px;top:617px;width:178px;height:25px;background:#d9d9d9;"></div>
<svg class="a" style="left:853px;top:623px" width="10" height="15" viewBox="0 0 10 15"><rect x="2.5" y="1" width="5" height="8.5" rx="2.5" fill="#2e2e2e"/><path d="M1 6.5c0 2.5 1.8 4 4 4s4-1.5 4-4M5 10.5v3" stroke="#2e2e2e" stroke-width="1.2" fill="none"/></svg>
<div class="a" style="left:0px;top:652.5px;width:1024px;height:21.5px;background:#f0f0f0;"></div>
<div class="a" style="left:0px;top:652px;width:1024px;height:1px;background:#dedede;"></div>
<svg class="a" style="left:0px;top:662px" width="8" height="10" viewBox="0 0 8 10"><path d="M0 1.5h7M0 4.5h7M0 7.5h7" stroke="#333" stroke-width="1.2"/></svg>
<svg class="a" style="left:21px;top:660px" width="14" height="14" viewBox="0 0 14 14"><circle cx="7" cy="6.5" r="5.8" fill="#2a2f38"/><path d="M2.2 9.5l-1.2 4 4.2-2z" fill="#2a2f38"/><path d="M4.5 8h5" stroke="#fff" stroke-width="1.2"/></svg>
<svg class="a" style="left:46px;top:660px" width="14" height="14" viewBox="0 0 14 14"><circle cx="7" cy="7" r="6.5" fill="#2a2f38"/><path d="M4.8 5.2c0-1.4 1-2.2 2.2-2.2s2.2.8 2.2 2c0 1.6-2.2 1.6-2.2 3.2" stroke="#fff" stroke-width="1.3" fill="none"/><circle cx="7" cy="10.6" r="0.8" fill="#fff"/></svg>
<svg class="a" style="left:82px;top:653px" width="16" height="21" viewBox="0 0 16 21"><path d="M15 0C9 2 5 10 2 21" stroke="#dcdcdc" stroke-width="1" fill="none"/></svg>
<svg class="a" style="left:103px;top:661px" width="24" height="12" viewBox="0 0 24 12"><rect x="0.5" y="0.5" width="23" height="11" rx="5.5" fill="#3a6ad0"/><circle cx="18" cy="6" r="4.6" fill="#f2a818"/><path d="M4.5 4l2 1 2-1M5.5 8l2-1" stroke="#a0bcf0" stroke-width="0.8" fill="none"/></svg>
<svg class="a" style="left:0px;top:0px" width="1024" height="674" viewBox="0 0 1024 674"><path d="M64.5 344.5H89V388H100.5L77 430L53.5 388H64.5Z" fill="none" stroke="#e8141e" stroke-width="4" stroke-linejoin="round"/><path d="M637 331.5H661V364H674L649 395L625 364H637Z" fill="none" stroke="#e8141e" stroke-width="3.8" stroke-linejoin="round"/></svg>
</body></html>
